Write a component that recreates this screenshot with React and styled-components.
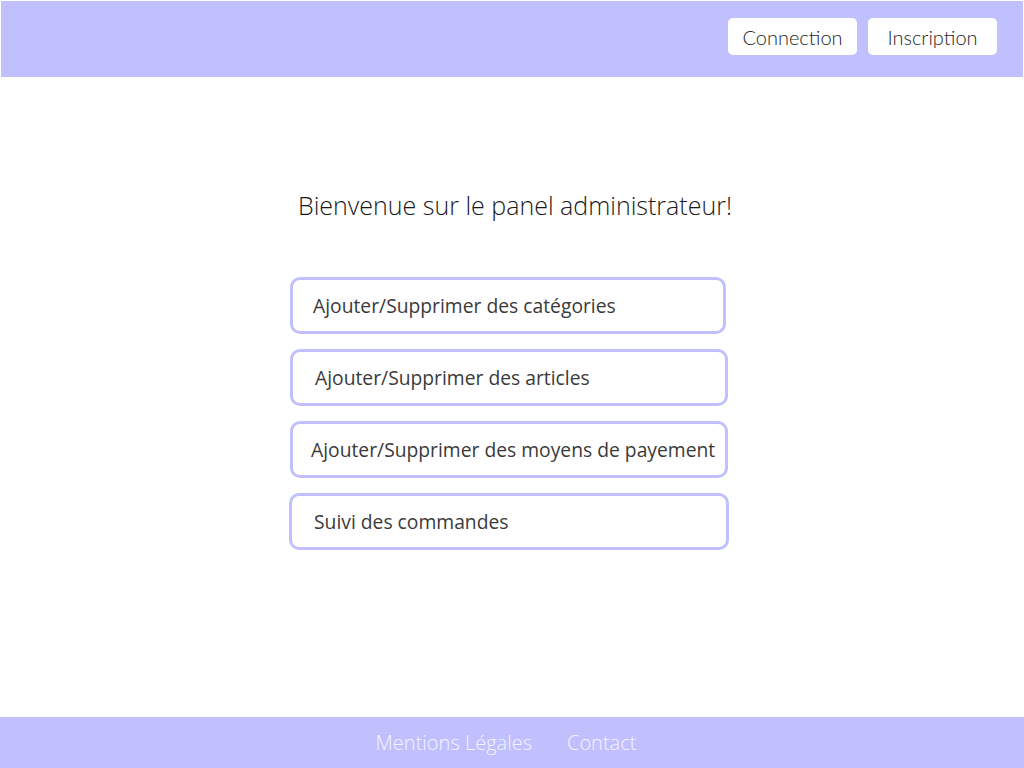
import styled, { createGlobalStyle } from 'styled-components';

const GlobalStyle = createGlobalStyle`
  html, body {
    margin: 0;
    padding: 0;
    background: #ffffff;
  }
  body {
    font-family: "Open Sans", "Liberation Sans", sans-serif;
  }
`;

const Page = styled.div`
  min-height: 100vh;
  display: flex;
  flex-direction: column;
`;

const Header = styled.header`
  margin: 1px 1px 0 1px;
  height: 76px;
  background: #c0c0ff;
  display: flex;
  justify-content: flex-end;
  align-items: flex-start;
  gap: 11px;
  padding: 17px 26px 0 0;
  box-sizing: border-box;
`;

const HeaderButton = styled.button`
  width: 129px;
  height: 37px;
  background: #ffffff;
  border: none;
  border-radius: 5px;
  font-family: Lato, "Open Sans", sans-serif;
  font-weight: 300;
  font-size: 20px;
  color: #1e1e1e;
  cursor: pointer;
  padding: 0;
`;

const Main = styled.main`
  flex: 1;
  display: flex;
  flex-direction: column;
  align-items: center;
  padding-top: 108px;
`;

const Title = styled.h1`
  margin: 0 0 0 6px;
  font-weight: 300;
  font-size: 25px;
  color: #1a1a1a;
  line-height: 40px;
`;

const Menu = styled.nav`
  display: flex;
  flex-direction: column;
  gap: 15px;
  margin-top: 52px;
  margin-left: -5px;
`;

const MenuItem = styled.a`
  display: flex;
  align-items: center;
  box-sizing: border-box;
  width: ${p => p.$w}px;
  height: 57px;
  border: 3px solid #c0c0ff;
  border-radius: 10px;
  padding-left: ${p => p.$pad}px;
  font-size: 19.3px;
  color: #3a3a3a;
  text-decoration: none;
  cursor: pointer;
  margin-left: ${p => p.$shift || 0}px;
`;

const Footer = styled.footer`
  height: 51px;
  background: #c0c0ff;
  display: flex;
  justify-content: center;
  align-items: center;
  gap: 35px;
  padding-right: 12px;
`;

const FooterLink = styled.a`
  font-weight: 300;
  font-size: 20px;
  color: #f4f4ff;
  text-decoration: none;
  cursor: pointer;
`;

const items = [
  { label: 'Ajouter/Supprimer des catégories', w: 436, pad: 20 },
  { label: 'Ajouter/Supprimer des articles', w: 438, pad: 22 },
  { label: 'Ajouter/Supprimer des moyens de payement', w: 438, pad: 18 },
  { label: 'Suivi des commandes', w: 440, pad: 22, shift: -1 },
];

const App = () => {
  return (
    <>
      <GlobalStyle />
      <Page>
        <Header>
          <HeaderButton>Connection</HeaderButton>
          <HeaderButton>Inscription</HeaderButton>
        </Header>
        <Main>
          <Title>Bienvenue sur le panel administrateur!</Title>
          <Menu>
            {items.map(item => (
              <MenuItem key={item.label} $w={item.w} $pad={item.pad} $shift={item.shift}>
                {item.label}
              </MenuItem>
            ))}
          </Menu>
        </Main>
        <Footer>
          <FooterLink>Mentions Légales</FooterLink>
          <FooterLink>Contact</FooterLink>
        </Footer>
      </Page>
    </>
  )
}

export default App
